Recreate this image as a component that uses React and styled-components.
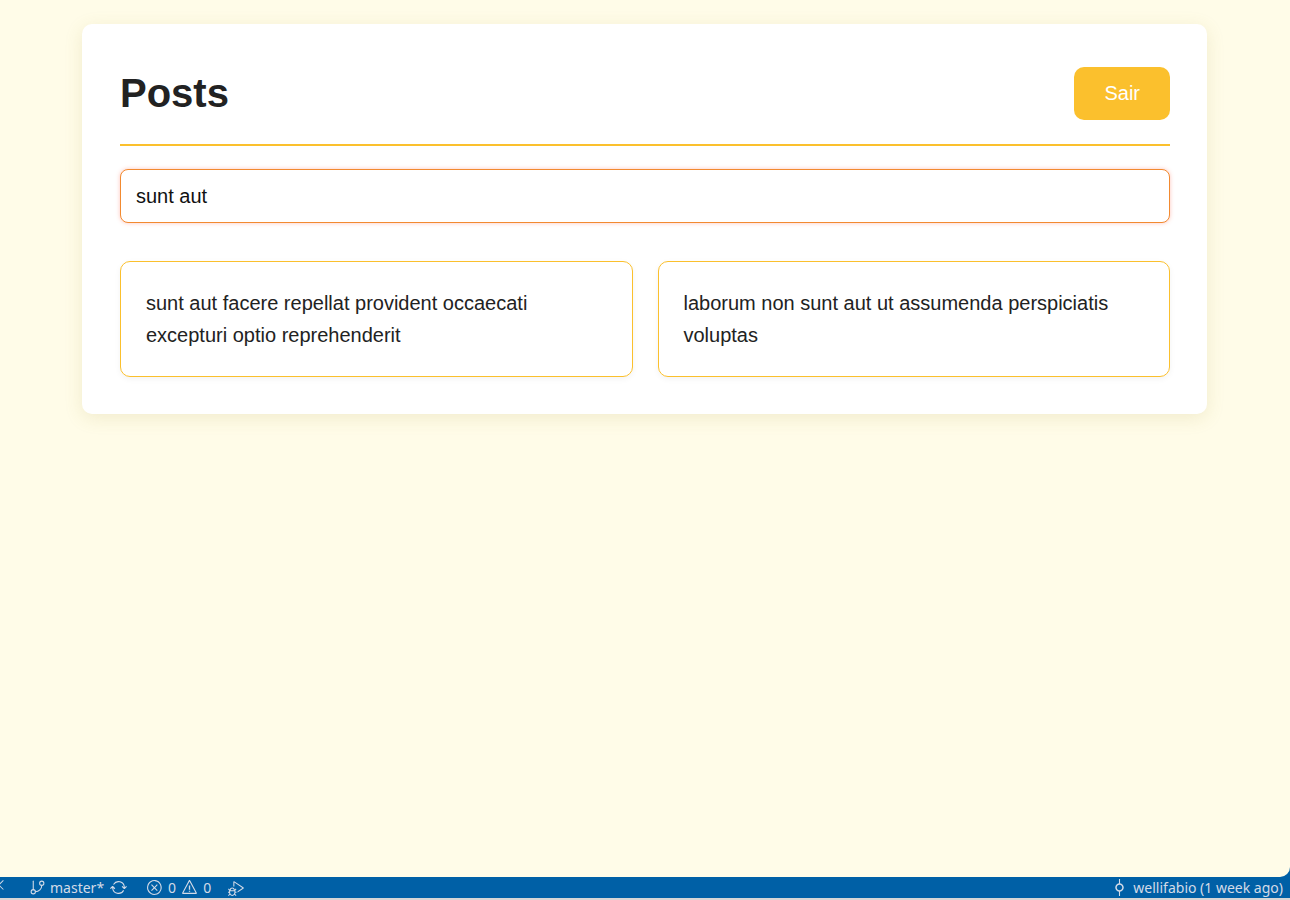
import React from 'react';
import styled, { createGlobalStyle } from 'styled-components';
import {
  VscRemote,
  VscSync,
  VscError,
  VscWarning,
  VscDebugAltSmall,
  VscGitCommit,
} from 'react-icons/vsc';
import { GitBranch } from 'lucide-react';

const GlobalStyle = createGlobalStyle`
  html, body {
    margin: 0;
    padding: 0;
  }
  body {
    font-family: "Liberation Sans", Arial, sans-serif;
    background: #0060a6;
  }
  * {
    box-sizing: border-box;
  }
`;

const Viewport = styled.div`
  height: 900px;
  display: flex;
  flex-direction: column;
  background: #0060a6;
  border-bottom: 2px solid #d6d6d6;
`;

const Page = styled.main`
  flex: 1;
  background: #fffce8;
  border-bottom-right-radius: 10px;
  padding: 24px 1px 0 0;
`;

const Panel = styled.section`
  width: 1125px;
  margin: 0 auto;
  background: #fff;
  border-radius: 10px;
  padding: 43px 37px 37px 38px;
  box-shadow: 0 4px 18px rgba(170, 150, 60, 0.16);
`;

const Header = styled.header`
  display: flex;
  align-items: center;
  justify-content: space-between;
  padding-bottom: 24px;
  border-bottom: 2px solid #fbc02d;
`;

const Title = styled.h1`
  margin: 0;
  font-size: 40px;
  font-weight: 700;
  color: #222;
`;

const LogoutButton = styled.button`
  cursor: pointer;
  background: #fbc02d;
  color: #fff;
  border: none;
  border-radius: 10px;
  font-family: inherit;
  font-size: 20px;
  padding: 15px 30px;
  line-height: 23px;
`;

const Search = styled.input`
  display: block;
  width: 100%;
  height: 54px;
  margin-top: 23px;
  padding: 0 15px;
  font-family: inherit;
  font-size: 20px;
  color: #111;
  border: 1px solid #f28a30;
  border-radius: 8px;
  outline: none;
  box-shadow: 0 0 4px rgba(255, 90, 60, 0.35);
`;

const Grid = styled.div`
  display: grid;
  grid-template-columns: 1fr 1fr;
  gap: 25px;
  margin-top: 38px;
`;

const PostCard = styled.article`
  border: 1px solid #fbc02d;
  border-radius: 10px;
  padding: 25px;
  font-size: 20px;
  line-height: 32px;
  color: #222;
  box-shadow: 0 2px 6px rgba(0, 0, 0, 0.05);
`;

const StatusBar = styled.footer`
  height: 21px;
  display: flex;
  align-items: center;
  justify-content: space-between;
  color: #d3dbe8;
  font-family: "Noto Sans", "Open Sans", sans-serif;
  font-size: 14px;
`;

const Group = styled.div`
  display: flex;
  align-items: center;
  margin-left: ${(p) => p.offset || 0}px;
`;

const Item = styled.span`
  display: flex;
  align-items: center;
  gap: ${(p) => p.gap || 4}px;
  margin-left: ${(p) => p.left || 0}px;
  margin-right: ${(p) => p.right || 0}px;
  white-space: nowrap;

  svg {
    font-size: 17px;
  }
`;

const posts = [
  'sunt aut facere repellat provident occaecati excepturi optio reprehenderit',
  'laborum non sunt aut ut assumenda perspiciatis voluptas',
];

const App = () => {
  return (
    <Viewport>
      <GlobalStyle />
      <Page>
        <Panel>
          <Header>
            <Title>Posts</Title>
            <LogoutButton>Sair</LogoutButton>
          </Header>
          <Search defaultValue="sunt aut" spellCheck />
          <Grid>
            {posts.map((title) => (
              <PostCard key={title}>{title}</PostCard>
            ))}
          </Grid>
        </Panel>
      </Page>
      <StatusBar>
        <Group offset={-10}>
          <Item right={22}><VscRemote /></Item>
          <Item gap={4}><GitBranch size={17} strokeWidth={1.5} />master*</Item>
          <Item left={6}><VscSync /></Item>
          <Item left={19} gap={5}><VscError />0</Item>
          <Item left={5} gap={5}><VscWarning />0</Item>
          <Item left={17}><VscDebugAltSmall /></Item>
        </Group>
        <Group>
          <Item right={7} gap={5}><VscGitCommit />wellifabio (1 week ago)</Item>
        </Group>
      </StatusBar>
    </Viewport>
  );
};

export default App;
